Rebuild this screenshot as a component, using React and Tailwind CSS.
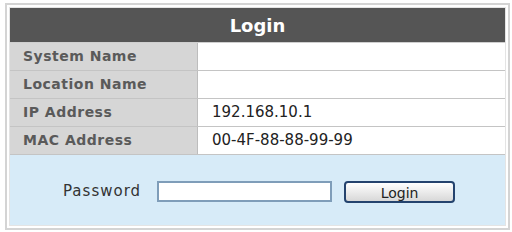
import React from "react";

const rows = [
  ["System Name", ""],
  ["Location Name", ""],
  ["IP Address", "192.168.10.1"],
  ["MAC Address", "00-4F-88-88-99-99"],
];

const App = () => {
  return (
    <div className="w-[512px] h-[232px] bg-white pt-[3px] pl-[5px] font-['DejaVu_Sans',Verdana,sans-serif]">
      <div className="w-[505px] h-[227px] border-2 border-[#d4d4d4] p-[2px] bg-white">
        <div className="flex flex-col h-full border border-[#e4e4e4]">
          <div className="h-[35px] bg-[#555555] flex items-center justify-center text-white font-bold text-[18px] border-b border-[#cfcfcf]">
            Login
          </div>
          {rows.map(([label, value]) => (
            <div key={label} className="flex h-[28px] border-b border-[#c4c4c4]">
              <div className="w-[188px] bg-[#d6d6d6] border-r border-[#bdbdbd] flex items-center pl-[13px] text-[14px] tracking-[0.5px] font-bold text-[#5a5a5a]">
                {label}
              </div>
              <div className="flex-1 bg-white flex items-center pl-[14px] text-[15px] text-[#222222]">
                {value}
              </div>
            </div>
          ))}
          <div className="flex-1 bg-[#d7ebf8] flex items-center pt-[3px] pl-[53px]">
            <span className="text-[15px] tracking-[1px] text-[#333333]">Password</span>
            <input
              type="password"
              className="ml-[16px] w-[175px] h-[21px] bg-white border-2 border-[#7f9db9] outline-none"
            />
            <button className="ml-[12px] w-[111px] h-[22px] rounded-[4px] border-2 border-[#24436e] bg-gradient-to-b from-white to-[#d8d8d8] text-[14px] text-[#222222]">
              Login
            </button>
          </div>
        </div>
      </div>
    </div>
  );
};

export default App;
